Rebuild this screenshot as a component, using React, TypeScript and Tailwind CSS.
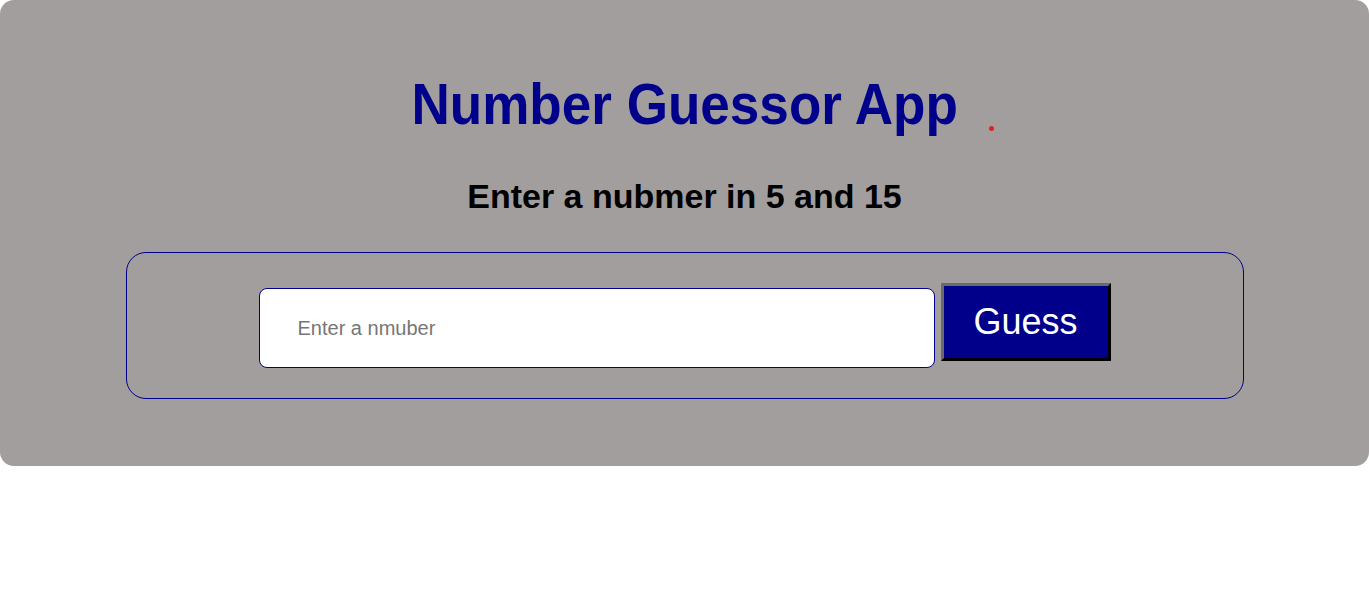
export default function App() {
  return (
    <div className="w-full h-[612px] bg-white">
      <div className="relative bg-[#a29e9e] rounded-[14px] h-[466px] flex flex-col items-center pt-[68px]">
        <h1
          className="inline-block text-[58px] leading-[72px] font-bold text-[#00008b] scale-x-[0.915]"
          style={{ fontFamily: '"Liberation Sans", Arial, sans-serif' }}
        >
          Number Guessor App
        </h1>
        <span className="absolute left-[989px] top-[126px] w-[5px] h-[5px] rounded-full bg-[#e02020]" />
        <h2
          className="mt-[36px] text-[34px] leading-[40px] font-bold text-black"
          style={{ fontFamily: '"Liberation Sans", Arial, sans-serif' }}
        >
          Enter a nubmer in 5 and 15
        </h2>
        <div className="mt-[36px] w-[1118px] h-[147px] border border-[#00008b] rounded-[20px] flex justify-center items-start pt-[30px] gap-[6px]">
          <input
            type="text"
            placeholder="Enter a nmuber"
            className="mt-[5px] w-[676px] h-[80px] bg-white border border-[#00008b] rounded-[8px] pl-[38px] text-[20px] placeholder:text-[#767676] outline-none"
            style={{ fontFamily: '"Liberation Sans", Arial, sans-serif' }}
          />
          <button
            className="w-[170px] h-[78px] bg-[#00008b] text-white text-[36px] border-[3px] border-t-[#6b6b6b] border-l-[#6b6b6b] border-r-black border-b-black"
            style={{ fontFamily: '"Liberation Sans", Arial, sans-serif' }}
          >
            Guess
          </button>
        </div>
      </div>
    </div>
  );
}
